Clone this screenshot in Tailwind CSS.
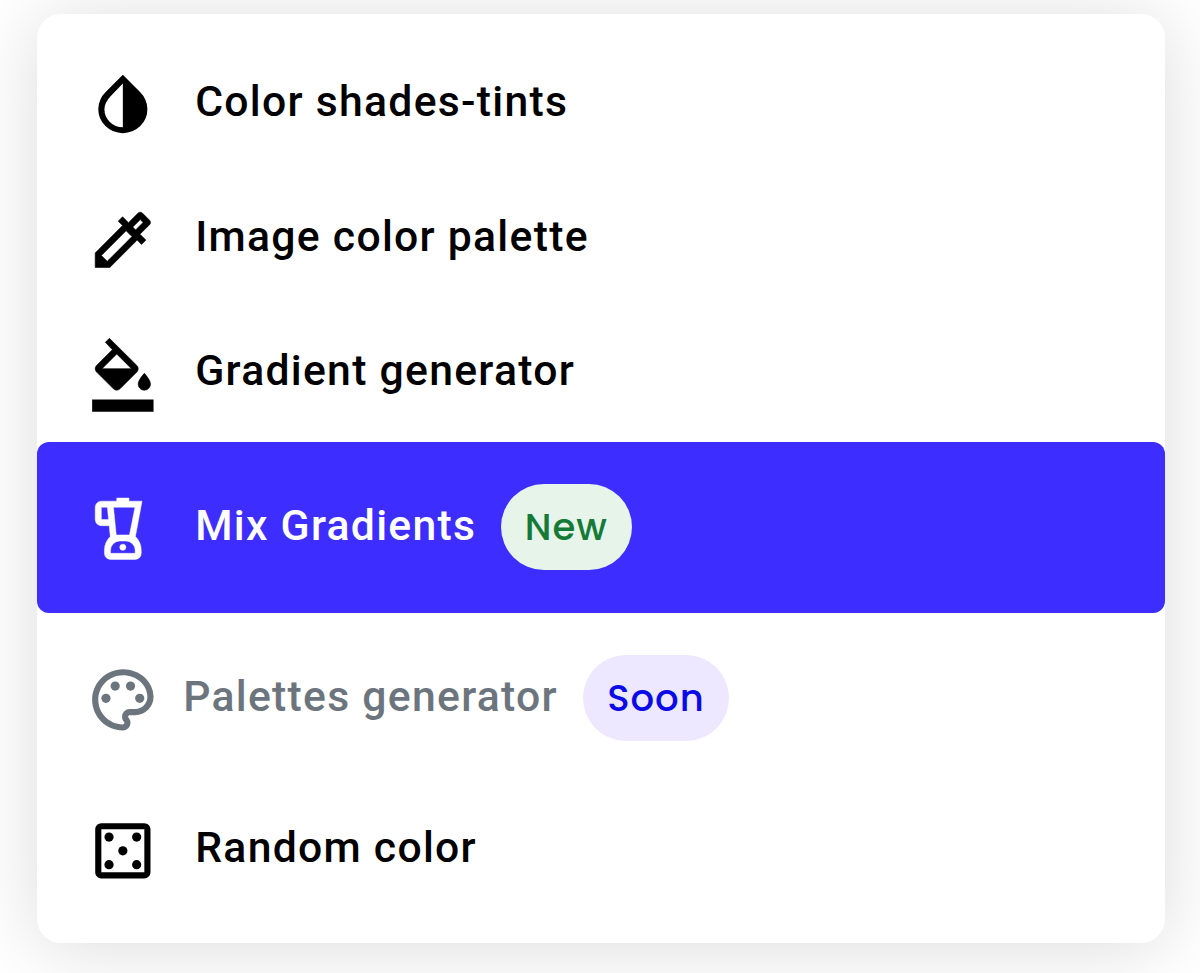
<!DOCTYPE html>
<html lang="en">
    <head>
    <meta charset="UTF-8">
    <meta name="viewport" content="width=device-width, initial-scale=1">
    <title>Color tools</title>
    <script src="https://cdn.jsdelivr.net/npm/@tailwindcss/browser@4"></script>
    </head>

    <body class="h-screen overflow-hidden bg-white px-[37px] pt-[14px] pr-[35px] font-['Roboto','Liberation_Sans',sans-serif]">
        <nav class="flex h-[929px] flex-col rounded-[24px] bg-white py-[24.5px] text-[42.7px] leading-[50px] font-medium text-black shadow-[0_5px_76px_rgba(0,0,0,0.14)]">
            <a href="#" class="flex h-[134.5px] items-center pl-[48.5px]">
                <svg class="size-[73.7px] shrink-0" viewBox="0 0 24 24" fill="currentColor" aria-hidden="true">
                    <path d="M12 20.9q-3.325 0-5.663-2.3Q4 16.3 4 13q0-1.575.7-3.1Q5.3 8.6 6.4 7.5L12 1.9l5.6 5.6q1.1 1.1 1.7 2.4Q20 11.425 20 13q0 3.3-2.337 5.6Q15.325 20.9 12 20.9ZM12 19V4.7L8 8.9q-1 1.05-1.5 2.1Q6 12.05 6 13.1q0 2.425 1.75 4.163Q9.5 19 12 19Z"/>
                </svg>
                <span class="ml-[36px] -mt-[9px] tracking-[1.28px]">Color shades-tints</span>
            </a>
            <a href="#" class="flex h-[134.5px] items-center pl-[48.5px]">
                <svg class="size-[73.7px] shrink-0" viewBox="0 0 24 24" fill="currentColor" stroke="currentColor" stroke-width=".2" stroke-linejoin="round" aria-hidden="true">
                    <path fill-rule="evenodd" d="M20.71 5.63l-2.34-2.34c-.39-.39-1.02-.39-1.41 0l-3.12 3.12-1.93-1.91-1.41 1.41 1.42 1.42L3 16.25V21h4.75l8.92-8.92 1.42 1.42 1.41-1.41-1.92-1.92 3.12-3.12c.4-.4.4-1.03.01-1.42zM6.92 19L5 17.08l8.06-8.06 1.92 1.92zM16.16 8.76l-.92-.92 2.43-2.43.92.92z"/>
                </svg>
                <span class="ml-[36px] -mt-[9px] tracking-[1.28px]">Image color palette</span>
            </a>
            <a href="#" class="flex h-[134.5px] items-center pl-[48.5px]">
                <svg class="size-[73.7px] shrink-0" viewBox="0 0 24 24" fill="currentColor" aria-hidden="true">
                    <path stroke="currentColor" stroke-width=".2" stroke-linejoin="round" d="M16.56 8.94L7.62 .1 6.31 1.41l2.28 2.38-5.15 5.15c-.59.59-.59 1.54 0 2.12l5.5 5.5c.29.29.68.44 1.06.44s.77-.15 1.06-.44l5.5-5.5c.59-.58.59-1.53 0-2.12zM5.21 10L10 5.21 14.79 10H5.21zM19 11.5s-2 2.17-2 3.5c0 1.1.9 2 2 2s2-.9 2-2c0-1.33-2-3.5-2-3.5z"/>
                    <path d="M2 20h20v4H2v-4z"/>
                </svg>
                <span class="ml-[36px] -mt-[9px] tracking-[1.28px]">Gradient generator</span>
            </a>
            <!-- active item -->
            <a href="#" class="flex h-[171px] items-center rounded-[12px] bg-[#3d2eff] pl-[48.5px] text-white">
                <svg class="mt-[9px] size-[73.7px] shrink-0" viewBox="0 0 24 24" fill="currentColor" stroke="currentColor" stroke-width=".15" stroke-linejoin="round" aria-hidden="true">
                    <path fill-rule="evenodd" d="M8 21q-.825 0-1.412-.587Q6 19.825 6 19v-1q0-1.35.525-2.513.525-1.162 1.375-1.987L7.55 10H5q-.825 0-1.412-.588Q3 8.825 3 8V4q0-.825.588-1.412Q4.175 2 5 2h5V1h4v1h4.25L16.1 13.5q.85.825 1.375 1.987Q18 16.65 18 18v1q0 .825-.587 1.413Q16.825 21 16 21ZM7.35 8 6.95 4H5v4ZM9.85 13h4.3L15.95 4H8.95ZM8 19h8v-1q0-1.25-.875-2.125T13 15h-2q-1.25 0-2.125.875T8 18Z"/>
                    <circle cx="12" cy="17" r="1"/>
                </svg>
                <span class="ml-[36px] -mt-[6px] tracking-[1.28px]">Mix Gradients</span>
                <span class="-mt-[1px] ml-[24.5px] flex h-[86px] w-[131px] items-center justify-center rounded-full bg-[#e6f4ea] font-['Poppins','Inter',sans-serif] text-[37px] font-medium tracking-[1px] text-[#157a38]">New</span>
            </a>
            <a href="#" class="flex h-[171px] items-center pl-[48.5px] text-[#6c757d]">
                <svg class="mt-[3px] size-[73.7px] shrink-0" viewBox="0 0 24 24" fill="currentColor" aria-hidden="true">
                    <path d="M12 22C6.49 22 2 17.51 2 12S6.49 2 12 2s10 4.04 10 9c0 3.31-2.69 6-6 6h-1.77c-.28 0-.5.22-.5.5 0 .12.05.23.13.33.41.47.64 1.06.64 1.67A2.5 2.5 0 0 1 12 22zm0-18c-4.41 0-8 3.59-8 8s3.59 8 8 8c.28 0 .5-.22.5-.5a.54.54 0 0 0-.14-.35c-.41-.46-.63-1.05-.63-1.65a2.5 2.5 0 0 1 2.5-2.5H16c2.21 0 4-1.79 4-4 0-3.86-3.59-7-8-7z"/>
                    <circle cx="6.5" cy="11.5" r="1.5"/>
                    <circle cx="9.5" cy="7.5" r="1.5"/>
                    <circle cx="14.5" cy="7.5" r="1.5"/>
                    <circle cx="17.5" cy="11.5" r="1.5"/>
                </svg>
                <span class="ml-[24px] -mt-[6px] tracking-[1.28px]">Palettes generator</span>
                <span class="-mt-[1px] ml-[25px] flex h-[86px] w-[146px] items-center justify-center rounded-full bg-[#ede7ff] font-['Poppins','Inter',sans-serif] text-[37px] font-medium tracking-[1px] text-[#0b0be8]">Soon</span>
            </a>
            <a href="#" class="flex h-[134.5px] items-center pl-[48.5px]">
                <svg class="size-[73.7px] shrink-0" viewBox="0 0 24 24" fill="currentColor" aria-hidden="true">
                    <path fill-rule="evenodd" d="M19 3H5c-1.1 0-2 .9-2 2v14c0 1.1.9 2 2 2h14c1.1 0 2-.9 2-2V5c0-1.1-.9-2-2-2zm0 16H5V5h14v14z"/>
                    <circle cx="7.5" cy="7.5" r="1.5"/>
                    <circle cx="16.5" cy="7.5" r="1.5"/>
                    <circle cx="12" cy="12" r="1.5"/>
                    <circle cx="7.5" cy="16.5" r="1.5"/>
                    <circle cx="16.5" cy="16.5" r="1.5"/>
                </svg>
                <span class="ml-[36px] -mt-[9px] tracking-[1.28px]">Random color</span>
            </a>
        </nav>
    </body>
</html>
